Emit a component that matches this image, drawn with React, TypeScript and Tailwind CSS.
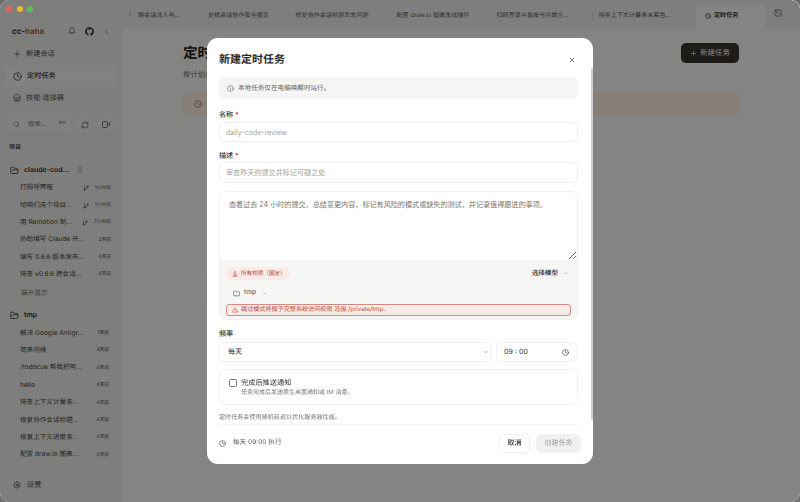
import React from 'react';
import {
  Bell,
  ChevronDown,
  ChevronLeft,
  Clock,
  Folder,
  FolderOpen,
  GitBranch,
  Info,
  Pin,
  Plus,
  RefreshCw,
  Search,
  Settings,
  Store,
  SquareTerminal,
  TriangleAlert,
  X,
  FlameKindling,
} from 'lucide-react';
import { FaGithub } from 'react-icons/fa';

const projectOne = [
  { title: '打招呼寒暄', time: '1小时前', branch: true },
  { title: '给咱们这个项目...', time: '1小时前', branch: true },
  { title: '用 Remotion 制...', time: '7小时前', branch: true },
  { title: '协助填写 Claude 开...', time: '2天前' },
  { title: '编写 0.6.6 版本发布...', time: '4天前' },
  { title: '排查 v0.6.6 跨会话...', time: '4天前' },
];

const projectTwo = [
  { title: '解决 Google Antigr...', time: '1天前' },
  { title: '简单问候', time: '3天前' },
  { title: '/todocue 帮我把阿...', time: '4天前' },
  { title: 'hello', time: '4天前' },
  { title: '排查上下文计量条...', time: '4天前' },
  { title: '修复协作会话标题...', time: '4天前' },
  { title: '修复上下文进度条...', time: '4天前' },
  { title: '配置 draw.io 图表...', time: '4天前' },
];

const tabs = [
  { title: '跨会话注入与...', w: 'w-[64px]' },
  { title: '复核会话协作安全报告', w: 'w-[87.5px]' },
  { title: '修复协作会话标题丢失问题', w: 'w-[101px]' },
  { title: '配置 draw.io 图表生成插件', w: 'w-[100px]' },
  { title: '扫码登录斗鱼账号并做企...', w: 'w-[102px]' },
  { title: '排查上下文计量条未着色...', w: 'w-[103.5px]' },
];

type Session = { title: string; time: string; branch?: boolean };

const SessionRow = ({ s, pr }: { s: Session; pr: string }) => (
  <div className={`flex h-[17.35px] items-center pl-[20px] ${pr}`}>
    <span className="flex-1 whitespace-nowrap text-[6.6px] text-[#454442]">{s.title}</span>
    {s.branch && <GitBranch size={6} className="mr-[6px] text-[#454442]" />}
    <span className="text-[4.8px] text-[#454442]">{s.time}</span>
  </div>
);

const Sidebar = () => (
  <div className="relative flex h-full w-[122px] shrink-0 flex-col bg-[#e6e5e2] text-[#2b2a28]">
    <div className="relative z-20 flex h-[17px] items-center gap-[4.5px] pl-[6px]">
      <span className="h-[6px] w-[6px] rounded-full bg-[#e5625c]" />
      <span className="h-[6px] w-[6px] rounded-full bg-[#efb92e]" />
      <span className="h-[6px] w-[6px] rounded-full bg-[#5cc05a]" />
    </div>
    <div className="mt-[6px] flex h-[16px] items-center pl-[12px]">
      <span className="flex-1 text-[8px] font-semibold">
        cc-<span className="text-[#a3553f]">haha</span>
      </span>
      <Bell size={8} className="mr-[9px] text-[#4d4c4a]" />
      <FaGithub size={9} className="mr-[9px]" />
      <ChevronLeft size={7} className="mr-[12px] text-[#4d4c4a]" />
    </div>
    <div className="mt-[4px] flex h-[22px] items-center gap-[5px] pl-[13px] text-[7.2px] text-[#4a4947]">
      <Plus size={8} />
      新建会话
    </div>
    <div className="mx-[6px] flex h-[22px] items-center gap-[5px] rounded-[5px] bg-[#eeede9] pl-[7px] text-[7.2px] font-medium">
      <Clock size={9} />
      定时任务
    </div>
    <div className="flex h-[22px] items-center gap-[5px] pl-[13px] text-[7.2px] text-[#4a4947]">
      <Store size={8} />
      技能·连接器
    </div>
    <div className="mt-[8px] flex h-[15px] items-center pl-[8px] pr-[8px]">
      <div className="flex h-full w-[64px] items-center rounded-[4px] bg-[#ebeae7] pl-[5px] text-[6.4px] text-[#6b6a66]">
        <Search size={7} className="mr-[8px]" />
        <span className="flex-1">搜索...</span>
        <span className="mr-[5px] text-[4.5px]">⌘K</span>
      </div>
      <div className="ml-[6px] flex h-full w-[16px] items-center justify-center rounded-[4px] bg-[#ebeae7]">
        <RefreshCw size={8} className="text-[#4d4c4a]" />
      </div>
      <div className="ml-[6px] flex h-full w-[16px] items-center justify-center rounded-[4px] bg-[#ebeae7]">
        <svg width="9" height="7" viewBox="0 0 9 7" fill="none" stroke="#4d4c4a" strokeWidth="0.8">
          <rect x="0.5" y="0.5" width="5" height="6" rx="1" />
          <path d="M7 2h2M7 2v3.5M7 3.6h1.4" strokeWidth="0.6" />
        </svg>
      </div>
    </div>
    <div className="mt-[11px] pl-[9px] text-[6px] font-medium text-[#2b2a28]">项目</div>
    <div className="mt-[11px] flex h-[14px] items-center pl-[10px] text-[7px] font-semibold">
      <FolderOpen size={9} className="mr-[5px]" />
      claude-cod...
      <Pin size={6} className="ml-[8px] text-[#8a8985]" />
    </div>
    <div className="mt-[2.5px] flex flex-col">
      {projectOne.map((s) => (
        <SessionRow key={s.title} s={s} pr="pr-[11px]" />
      ))}
    </div>
    <div className="mt-[2px] flex h-[17px] items-center pl-[21px] text-[6.6px] text-[#6f6e6a]">展开显示</div>
    <div className="mt-[6px] flex h-[14px] items-center pl-[10px] text-[7px] font-semibold">
      <FolderOpen size={9} className="mr-[5px]" />
      tmp
    </div>
    <div className="mt-[2.5px] flex flex-col">
      {projectTwo.map((s) => (
        <SessionRow key={s.title} s={s} pr="pr-[13px]" />
      ))}
    </div>
    <div className="mt-auto mb-[11px] flex h-[12px] items-center gap-[6px] pl-[13px] text-[7.2px] text-[#4a4947]">
      <Settings size={8} />
      设置
    </div>
  </div>
);

const Main = () => (
  <div className="flex h-full flex-1 flex-col bg-[#f3f1ee]">
    <div className="flex h-[28px] items-end bg-[#e6e5e2] pl-[5px]">
      <div className="flex h-[28px] w-[11px] items-center">
        <ChevronLeft size={6} className="text-[#55534f]" />
      </div>
      {tabs.map((t, i) => (
        <div key={t.title} className={`flex h-[24px] items-center ${t.w} ${i > 0 ? 'pl-[6px]' : ''}`}>
          <span className="flex-1 whitespace-nowrap text-[6.1px] text-[#555452]">{t.title}</span>
          {i < 5 && <span className="h-[8px] w-px bg-[#d5d4d0]" />}
        </div>
      ))}
      <div className="flex h-[24px] w-[70px] items-center gap-[3px] rounded-t-[5px] bg-[#f3f1ee] pl-[9px] text-[6.1px] font-medium">
        <Clock size={6} />
        定时任务
      </div>
      <div className="flex h-[28px] flex-1 items-center pl-[8px]">
        <SquareTerminal size={8} className="mb-[2px] text-[#55534f]" />
      </div>
    </div>
    <div className="flex flex-col px-[61px] pt-[15px]">
      <div className="flex h-[20px] items-center justify-between">
        <span className="pt-[2px] text-[14.6px] font-semibold text-[#1f1e1d]">定时任务</span>
        <div className="flex h-[20px] w-[58px] items-center justify-center gap-[3px] rounded-[5px] bg-[#36332f] text-[7.4px] text-[#f1f0ee]">
          <Plus size={7} />
          新建任务
        </div>
      </div>
      <div className="mt-[6px] text-[7.4px] text-[#6b6a66]">按计划自动运行任务。</div>
      <div className="mt-[12px] flex h-[24px] items-center rounded-[7px] border border-[#eee2d3] bg-[#f6eadb] pl-[10px]">
        <Clock size={8} className="text-[#a3553f]" />
      </div>
    </div>
  </div>
);

const Label = ({ text, className }: { text: string; className: string }) => (
  <div className={`text-[7.1px] font-medium leading-[10px] text-[#333230] ${className}`}>
    {text} <span className="text-[#c0392b]">*</span>
  </div>
);

const inputClass =
  'block w-full h-[20.5px] rounded-[5px] border border-[#f1f0ee] bg-white px-[6px] text-[7.1px] outline-none placeholder:text-[#a5a4a1]';

const Modal = () => (
  <div className="relative flex h-[426px] w-[386px] flex-col rounded-[11px] bg-white pl-[12px] pr-[15px]">
    <div className="flex h-[39px] shrink-0 items-center justify-between pt-[4px]">
      <span className="text-[11px] font-semibold text-[#2b2a28]">新建定时任务</span>
      <X size={8} className="mr-[2px] text-[#3f3e3c]" />
    </div>
    <div className="flex h-[22px] shrink-0 items-center gap-[4px] rounded-[5px] bg-[#f5f5f4] pl-[8px] text-[6.6px] text-[#5f5e5c]">
      <Info size={7} />
      <span className="pt-[2px]">本地任务仅在电脑唤醒时运行。</span>
    </div>
    <Label text="名称" className="mt-[10.5px]" />
    <input className={`${inputClass} mt-[2.5px]`} placeholder="daily-code-review" readOnly />
    <Label text="描述" className="mt-[8.5px]" />
    <input className={`${inputClass} mt-[1.5px]`} placeholder="审查昨天的提交并标记可疑之处" readOnly />
    <div className="mt-[8.5px] h-[129px] shrink-0 overflow-hidden rounded-[7px] border border-[#f1f0ee]">
      <textarea
        className="block h-[68px] w-full resize-y bg-white px-[9px] pb-[6px] pt-[8px] text-[7.1px] leading-[10px] outline-none placeholder:text-[#77756f]"
        placeholder="查看过去 24 小时的提交。总结变更内容，标记有风险的模式或缺失的测试，并记录值得跟进的事项。"
        readOnly
      />
      <div className="h-[60px] bg-[#f6f6f5] px-[6px] pt-[7px]">
        <div className="flex h-[13px] items-center justify-between">
          <div className="flex h-[13px] w-[64px] items-center gap-[3px] rounded-full bg-[#fbeae6] pl-[6px] text-[5.6px] text-[#b5483c]">
            <FlameKindling size={6} />
            <span>所有权限（固定）</span>
          </div>
          <div className="flex items-center gap-[5px] pr-[3px] text-[6.6px] font-medium text-[#333230]">
            <span>选择模型</span>
            <ChevronDown size={5} className="text-[#77756f]" />
          </div>
        </div>
        <div className="mt-[6px] flex h-[14px] items-center gap-[4px] pl-[7px] text-[6.6px] text-[#4d4c4a]">
          <Folder size={7} />
          <span>tmp</span>
          <ChevronDown size={5} className="ml-[2px] text-[#77756f]" />
        </div>
        <div className="mt-[4px] flex h-[11.5px] items-center gap-[3px] rounded-[3px] border border-[#d98a80] bg-[#faebe6] pl-[5px] text-[6.1px] text-[#b5483c]">
          <TriangleAlert size={6} />
          <span>跳过模式将授予完整系统访问权限 范围 /private/tmp.</span>
        </div>
      </div>
    </div>
    <div className="mt-[9px] text-[7.1px] font-medium leading-[10px] text-[#333230]">频率</div>
    <div className="mt-[3px] flex h-[20px] shrink-0 gap-[5px]">
      <div className="flex flex-1 items-center justify-between rounded-[5px] border border-[#f1f0ee] pl-[8px] pr-[1.5px] text-[7.1px] text-[#333230]">
        每天
        <ChevronDown size={6} className="text-[#77756f]" />
      </div>
      <div className="flex w-[82px] items-center justify-between rounded-[5px] border border-[#f1f0ee] pl-[7px] pr-[8px] text-[7.1px] text-[#333230]">
        09 : 00
        <Clock size={7} />
      </div>
    </div>
    <div className="mt-[7px] flex h-[36px] shrink-0 items-center gap-[4px] rounded-[7px] border border-[#f1f0ee] pl-[9px]">
      <span className="mb-[8px] h-[8px] w-[8px] rounded-[1.5px] border border-[#77756f]" />
      <div className="flex flex-col">
        <span className="text-[7.2px] leading-[11px] text-[#333230]">完成后推送通知</span>
        <span className="text-[6px] leading-[10px] text-[#77756f]">任务完成后发送原生桌面通知或 IM 消息。</span>
      </div>
    </div>
    <div className="mt-[9px] text-[6.1px] leading-[8px] text-[#77756f]">定时任务会使用随机延迟以优化服务器性能。</div>
    <div className="mt-[2px] flex h-[40px] items-center border-t border-[#f3f3f2] pb-[3px]">
      <Clock size={7} className="mr-[7px] text-[#3f3e3c]" />
      <span className="flex-1 text-[6.6px] text-[#5f5e5c]">每天 09:00 执行</span>
      <div className="flex h-[19px] w-[31px] items-center justify-center rounded-[5px] border border-[#f1f0ee] text-[7px] font-medium text-[#333230]">
        取消
      </div>
      <div className="-mr-[3px] ml-[6px] flex h-[19px] w-[45px] items-center justify-center rounded-[5px] bg-[#f1f1f0] text-[7px] text-[#9c9b98]">
        创建任务
      </div>
    </div>
    {/* overlay scrollbar of the form */}
    <div className="absolute right-[0px] top-[30px] h-[352px] w-[2.5px] bg-[#cfcfcf]" />
  </div>
);

export default function App() {
  return (
    <div className="h-[502px] w-[800px] overflow-hidden bg-[#6e6e6e] font-['Inter','Noto_Sans_CJK_SC',sans-serif] [text-rendering:geometricPrecision]">
      <div className="relative flex h-full w-full overflow-hidden rounded-[9px]">
        <Sidebar />
        <Main />
        <div className="absolute inset-0 z-10 flex items-center justify-center bg-black/45 backdrop-blur-[0.5px]">
          <Modal />
        </div>
      </div>
    </div>
  );
}
